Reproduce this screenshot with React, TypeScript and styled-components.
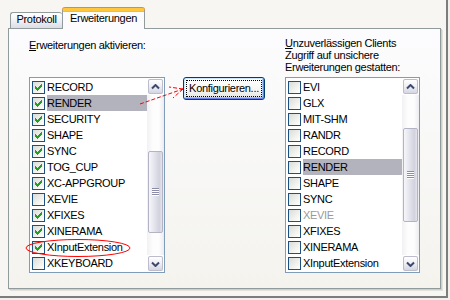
import styled, { createGlobalStyle } from "styled-components";

const GlobalStyle = createGlobalStyle`
  html, body {
    margin: 0;
    padding: 0;
  }
  body {
    background: #f4f3ee;
    font-family: "Liberation Sans", Arial, sans-serif;
    font-size: 11px;
    letter-spacing: -0.3px;
  }
`;

const Frame = styled.div`
  position: relative;
  width: 450px;
  height: 300px;
  background: #f1f0ec;
  overflow: hidden;
`;

const Window = styled.div`
  width: 448px;
  height: 298px;
  box-sizing: border-box;
  padding: 8px 0 0 8px;
  border-right: 2px solid #7d7d7d;
  border-bottom: 2px solid #7d7d7d;
  background: #f7f6f2;
`;

const TabStrip = styled.div`
  position: relative;
  z-index: 1;
  display: flex;
  align-items: flex-end;
  height: 21px;
  margin-bottom: -1px;
  padding-left: 2px;
`;

const Tab = styled.div<{ $active?: boolean }>`
  box-sizing: border-box;
  display: flex;
  justify-content: center;
  line-height: 13px;
  color: #000;
  border: 1px solid #919b9c;
  border-bottom: none;
  border-radius: 3px 3px 0 0;
  ${(p) =>
    p.$active
      ? `
    width: 83px;
    height: 21px;
    padding-top: 1px;
    border-top: 3px solid #ffc83c;
    box-shadow: inset 0 1px 0 #f5b747, 0 -1px 0 #e68b2c;
    background: #fcfcfe;
  `
      : `
    width: 52px;
    height: 16px;
    margin-bottom: 1px;
    border-right: none;
    background: linear-gradient(#ffffff, #f3f3f7 45%, #dcdce6);
  `}
`;

const Panel = styled.div`
  box-sizing: border-box;
  width: 433px;
  height: 261px;
  padding: 8px 20px 0 20px;
  border: 1px solid #919b9c;
  background: linear-gradient(#fcfcfe, #f4f3ee);
  box-shadow: 1px 1px 0 #d0cfc5, 2px 2px 0 #e3e2da;
  display: grid;
  grid-template-columns: 136px 1fr 135px;
  grid-template-rows: 36px auto;
  row-gap: 4px;
`;

const Caption = styled.div<{ $offset?: number }>`
  line-height: 12px;
  margin-top: ${(p) => p.$offset ?? 0}px;
  color: #000;
  u {
    text-decoration: underline;
  }
`;

const ListBox = styled.div`
  display: flex;
  height: 196px;
  box-sizing: border-box;
  border: 1px solid #7f9db9;
  background: #fff;
`;

const Items = styled.div`
  flex: 1;
  padding-top: 1px;
  overflow: hidden;
`;

const Row = styled.div`
  display: flex;
  align-items: center;
  gap: 2px;
  height: 16px;
  padding-left: 2px;
`;

const RowText = styled.span<{ $selected?: boolean; $disabled?: boolean }>`
  flex: 1;
  height: 16px;
  line-height: 16px;
  white-space: nowrap;
  background: ${(p) => (p.$selected ? "#b2b3bd" : "transparent")};
  color: ${(p) => (p.$disabled ? "#9a9a9a" : "#000")};
`;

const Box = styled.span`
  flex: none;
  width: 13px;
  height: 13px;
  box-sizing: border-box;
  border: 1px solid #1c5180;
  background: linear-gradient(135deg, #dcdcd7 0%, #f0f0ec 55%, #ffffff 100%);
  display: flex;
  align-items: center;
  justify-content: center;
`;

const ScrollBar = styled.div`
  flex: none;
  width: 17px;
  display: flex;
  flex-direction: column;
  background: linear-gradient(to right, #f1f1f4, #fdfdfe 35%, #fdfdfe 70%, #ececf0);
`;

const ScrollButton = styled.div`
  flex: none;
  height: 17px;
  box-sizing: border-box;
  border: 1px solid #fff;
  display: flex;
`;

const ScrollButtonFace = styled.div`
  flex: 1;
  box-sizing: border-box;
  border: 1px solid #bcbccd;
  border-radius: 2px;
  background: linear-gradient(#ffffff, #eeeef4 50%, #d6d6e2);
  display: flex;
  align-items: center;
  justify-content: center;
`;

const Track = styled.div`
  flex: 1;
  display: flex;
  flex-direction: column;
`;

const Thumb = styled.div<{ $top: number; $size: number }>`
  box-sizing: border-box;
  margin: ${(p) => p.$top}px 1px 0 1px;
  height: ${(p) => p.$size}px;
  border: 1px solid #b3b3c6;
  border-radius: 2px;
  background: linear-gradient(to right, #f6f6fa, #e2e2ec 45%, #d2d2de 80%, #e4e4ec);
  display: flex;
  align-items: center;
  justify-content: center;
`;

const Grip = styled.div`
  width: 7px;
  height: 8px;
  background: repeating-linear-gradient(to bottom, #8c8ca6 0 1px, #ffffff 1px 2px);
`;

const ButtonCell = styled.div`
  justify-self: start;
  margin-left: 18px;
`;

const PushButton = styled.button`
  width: 82px;
  height: 23px;
  padding: 3px;
  box-sizing: border-box;
  border: 1px solid #003c74;
  border-radius: 3px;
  background: linear-gradient(#ffffff, #f5f5f3 60%, #e3e2dd);
  box-shadow: inset 1px 1px 0 #cee7ff, inset -1px -1px 0 #6982ee, inset -2px -2px 0 #adc8f7;
  font: inherit;
  letter-spacing: inherit;
  color: #000;
  display: flex;
`;

const FocusRing = styled.span`
  flex: 1;
  display: flex;
  align-items: center;
  justify-content: center;
  outline: 1px dotted #000;
  line-height: 13px;
`;

const Overlay = styled.svg`
  position: absolute;
  left: 0;
  top: 0;
  pointer-events: none;
`;

type Item = { name: string; checked?: boolean; selected?: boolean; disabled?: boolean };

const enabledItems: Item[] = [
  { name: "RECORD", checked: true },
  { name: "RENDER", checked: true, selected: true },
  { name: "SECURITY", checked: true },
  { name: "SHAPE", checked: true },
  { name: "SYNC", checked: true },
  { name: "TOG_CUP", checked: true },
  { name: "XC-APPGROUP", checked: true },
  { name: "XEVIE" },
  { name: "XFIXES", checked: true },
  { name: "XINERAMA", checked: true },
  { name: "XInputExtension", checked: true },
  { name: "XKEYBOARD" },
];

const untrustedItems: Item[] = [
  { name: "EVI" },
  { name: "GLX" },
  { name: "MIT-SHM" },
  { name: "RANDR" },
  { name: "RECORD" },
  { name: "RENDER", selected: true },
  { name: "SHAPE" },
  { name: "SYNC" },
  { name: "XEVIE", disabled: true },
  { name: "XFIXES" },
  { name: "XINERAMA" },
  { name: "XInputExtension" },
];

// classic 7x7 XP check mark
const checkPixels: [number, number, number][] = [
  [6, 0, 1],
  [5, 1, 2],
  [0, 2, 1],
  [4, 2, 3],
  [0, 3, 2],
  [3, 3, 3],
  [0, 4, 5],
  [1, 5, 3],
  [2, 6, 1],
];

const Check = () => (
  <svg width="7" height="7" viewBox="0 0 7 7" shapeRendering="crispEdges">
    {checkPixels.map(([x, y, w], i) => (
      <rect key={i} x={x} y={y} width={w} height={1} fill="#21a121" />
    ))}
  </svg>
);

const Arrow = ({ down }: { down?: boolean }) => (
  <svg width="9" height="6" viewBox="0 0 9 6">
    <path
      d={down ? "M1 1.5 L4.5 5 L8 1.5" : "M1 4.5 L4.5 1 L8 4.5"}
      fill="none"
      stroke="#3b4a6b"
      strokeWidth="2"
    />
  </svg>
);

const ScrollList = ({ items, thumbTop, thumbSize }: { items: Item[]; thumbTop: number; thumbSize: number }) => (
  <ListBox>
    <Items>
      {items.map((it) => (
        <Row key={it.name}>
          <Box>{it.checked && <Check />}</Box>
          <RowText $selected={it.selected} $disabled={it.disabled}>
            {it.name}
          </RowText>
        </Row>
      ))}
    </Items>
    <ScrollBar>
      <ScrollButton>
        <ScrollButtonFace>
          <Arrow />
        </ScrollButtonFace>
      </ScrollButton>
      <Track>
        <Thumb $top={thumbTop} $size={thumbSize}>
          <Grip />
        </Thumb>
      </Track>
      <ScrollButton>
        <ScrollButtonFace>
          <Arrow down />
        </ScrollButtonFace>
      </ScrollButton>
    </ScrollBar>
  </ListBox>
);

export default function App() {
  return (
    <Frame>
      <GlobalStyle />
      <Window>
        <TabStrip>
          <Tab>Protokoll</Tab>
          <Tab $active>Erweiterungen</Tab>
        </TabStrip>
        <Panel>
          <Caption $offset={2}>
            <u>E</u>rweiterungen aktivieren:
          </Caption>
          <div />
          <Caption>
            <u>U</u>nzuverlässigen Clients
            <br />
            Zugriff auf unsichere
            <br />
            Erweiterungen gestatten:
          </Caption>
          <ScrollList items={enabledItems} thumbTop={56} thumbSize={82} />
          <ButtonCell>
            <PushButton>
              <FocusRing>Konfigurieren...</FocusRing>
            </PushButton>
          </ButtonCell>
          <ScrollList items={untrustedItems} thumbTop={33} thumbSize={94} />
        </Panel>
      </Window>
      <Overlay width="450" height="300" viewBox="0 0 450 300">
        <ellipse cx="78" cy="248" rx="52" ry="8.5" fill="none" stroke="#ff0000" strokeWidth="1" />
        <g stroke="#ff0000" strokeWidth="1" strokeDasharray="4 2" fill="none">
          <line x1="140" y1="104" x2="183" y2="89" />
          <line x1="183" y1="89" x2="169" y2="87" />
          <line x1="183" y1="89" x2="173" y2="98" />
        </g>
      </Overlay>
    </Frame>
  );
}
